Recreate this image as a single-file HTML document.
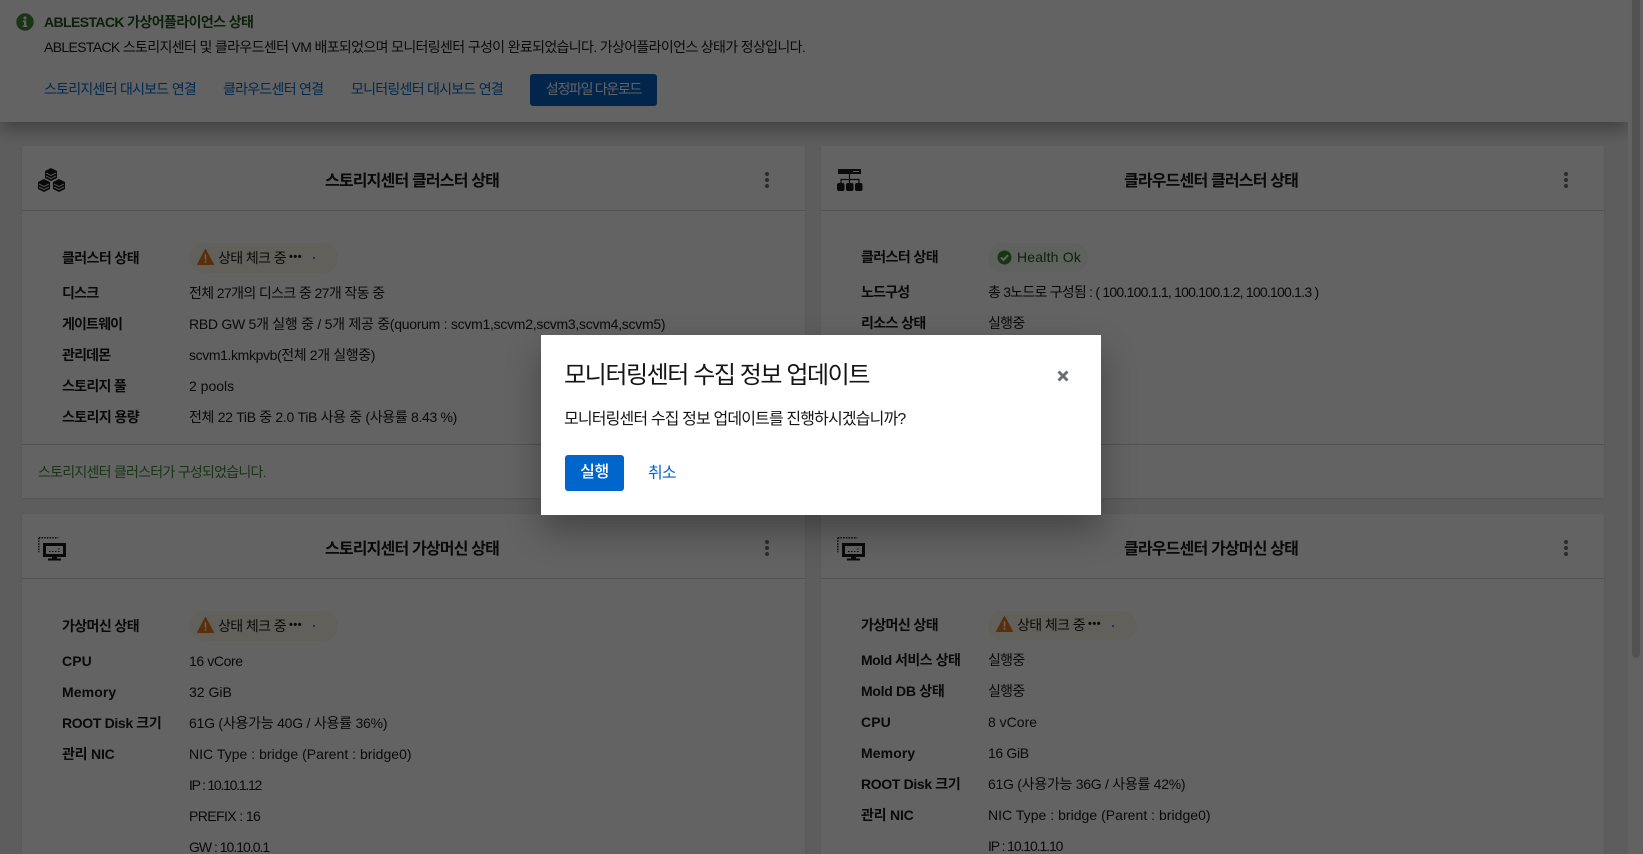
<!DOCTYPE html>
<html lang="ko"><head><meta charset="utf-8"><title>ABLESTACK</title>
<style>
*{box-sizing:border-box}
html,body{margin:0;padding:0;width:1643px;height:854px;overflow:hidden}
body{background:#f0f0f0;font-family:"Liberation Sans","Noto Sans CJK KR",sans-serif;font-size:14px;color:#151515;position:relative}
.t{position:absolute;line-height:20px;height:20px;white-space:nowrap}
.l{font-weight:700;letter-spacing:-.6px}
.k{letter-spacing:-.7px}
.card{position:absolute;background:#fff;width:783px;box-shadow:0 1px 2px rgba(3,3,3,.12)}
.hr{position:absolute;left:0;right:0;height:1px;background:#d2d2d2}
.h{font-size:16px;font-weight:700;text-align:center;left:0;right:3px;height:24px;line-height:24px;letter-spacing:-.82px}
.a{color:#06c;letter-spacing:-.74px}
.bdg{position:absolute;height:30px;border-radius:15px}
.w{background:#fdf7e7}.s{background:#f3faf2}
.dot{position:absolute;width:4px;height:4px;border-radius:50%;background:#6a6e73}
.d3{font-size:11px;font-weight:700;letter-spacing:.5px}
svg{position:absolute;overflow:visible}
</style></head><body>

<div style="position:absolute;left:0;top:0;width:1628px;height:854px;overflow:hidden">
<!-- Card 1 -->
<div class="card" style="left:22px;top:146px;height:352px">
  <div class="t h" style="top:24px">스토리지센터 클러스터 상태</div>
  <div class="hr" style="top:64px"></div><div class="hr" style="top:298px"></div>
  <i class="dot" style="left:743px;top:26px"></i><i class="dot" style="left:743px;top:32px"></i><i class="dot" style="left:743px;top:38px"></i>
  <div class="t" style="left:16px;top:316px;color:#3e8635;letter-spacing:-.75px">스토리지센터 클러스터가 구성되었습니다.</div>
</div>
<svg style="left:38px;top:168px" width="28" height="25" viewBox="0 0 28 25"><g fill="#151515"><path d="M13 0l6 3v7l-6 3-6-3V3z"/><path d="M6 11l6 3v7l-6 3-6-3v-7z"/><path d="M21 11l6 3v7l-6 3-6-3v-7z"/></g><g fill="none" stroke="#fff" stroke-width=".8"><path d="M8 5l5 2.500L18 5M8 8l5 2.500L18 8M1 16l5 2.500L11 16M1 19l5 2.500L11 19M16 16l5 2.500L26 16M16 19l5 2.500L26 19"/></g></svg>
<div class="bdg w" style="left:189px;top:243px;width:149px"></div>
<svg style="left:197px;top:249px" width="17" height="16" viewBox="0 0 16 15"><path d="M8 .5l7.500 14H.5z" fill="#e8751a" stroke="#e8751a" stroke-linejoin="round"/><path d="M7.200 5h1.600v5H7.200zM7.200 11h1.600v1.800H7.200z" fill="#fff"/></svg>
<div class="t" style="left:218px;top:248px;letter-spacing:-.6px">상태 체크 중</div>
<div class="t d3" style="left:289px;top:247px">•••</div>
<i style="position:absolute;left:313px;top:257px;width:2px;height:2px;background:#06c;border-radius:50%"></i>

<div class="t l" style="left:62px;top:248px">클러스터 상태</div>
<div class="t l" style="left:62px;top:283px;letter-spacing:-.7px">디스크</div><div class="t" style="left:189px;top:283px;letter-spacing:-.62px">전체 27개의 디스크 중 27개 작동 중</div>
<div class="t l" style="left:62px;top:314px;letter-spacing:-.85px">게이트웨이</div><div class="t" style="left:189px;top:314px;letter-spacing:-.27px">RBD GW 5개 실행 중 / 5개 제공 중(quorum : scvm1,scvm2,scvm3,scvm4,scvm5)</div>
<div class="t l" style="left:62px;top:345px;letter-spacing:-.8px">관리데몬</div><div class="t" style="left:189px;top:345px;letter-spacing:-.38px">scvm1.kmkpvb(전체 2개 실행중)</div>
<div class="t l" style="left:62px;top:376px;letter-spacing:-.7px">스토리지 풀</div><div class="t" style="left:189px;top:376px">2 pools</div>
<div class="t l" style="left:62px;top:407px">스토리지 용량</div><div class="t" style="left:189px;top:407px;letter-spacing:-.32px">전체 22 TiB 중 2.0 TiB 사용 중 (사용률 8.43 %)</div>

<!-- Card 2 -->
<div class="card" style="left:821px;top:146px;height:352px">
  <div class="t h" style="top:24px">클라우드센터 클러스터 상태</div>
  <div class="hr" style="top:64px"></div><div class="hr" style="top:298px"></div>
  <i class="dot" style="left:743px;top:26px"></i><i class="dot" style="left:743px;top:32px"></i><i class="dot" style="left:743px;top:38px"></i>
</div>
<svg style="left:837px;top:168px" width="26" height="23" viewBox="0 0 26 23"><path d="M1 1h23v5H1z" fill="#151515"/><path d="M16 3h6v1h-6z" fill="#fff"/><path d="M12.500 6v9M4 15v-3.500h18V15" fill="none" stroke="#151515" stroke-width="1.200"/><rect x="0" y="15" width="7.500" height="8" rx="2" fill="#151515"/><rect x="9" y="15" width="7.500" height="8" rx="2" fill="#151515"/><rect x="18" y="15" width="7.500" height="8" rx="2" fill="#151515"/></svg>
<div class="bdg s" style="left:988px;top:243px;width:100px;height:29px"></div>
<svg style="left:997px;top:250px" width="15" height="15" viewBox="0 0 15 15"><circle cx="7.500" cy="7.500" r="7" fill="#3e8635"/><path d="M4 7.500l2.500 2.500L11 5.200" fill="none" stroke="#fff" stroke-width="2"/></svg>
<div class="t" style="left:1017px;top:247px;color:#1e4f18;letter-spacing:.2px">Health Ok</div>
<div class="t l" style="left:861px;top:247px">클러스터 상태</div>
<div class="t l" style="left:861px;top:282px;letter-spacing:-.8px">노드구성</div><div class="t" style="left:988px;top:282px;letter-spacing:-.77px">총 3노드로 구성됨 : ( 100.100.1.1, 100.100.1.2, 100.100.1.3 )</div>
<div class="t l" style="left:861px;top:313px">리소스 상태</div><div class="t k" style="left:988px;top:313px">실행중</div>

<!-- Card 3 -->
<div class="card" style="left:22px;top:514px;height:400px">
  <div class="t h" style="top:24px">스토리지센터 가상머신 상태</div>
  <div class="hr" style="top:64px"></div>
  <i class="dot" style="left:743px;top:26px"></i><i class="dot" style="left:743px;top:32px"></i><i class="dot" style="left:743px;top:38px"></i>
</div>
<svg style="left:38px;top:537px" width="28" height="24" viewBox="0 0 28 24"><path d="M.8.800h19.500M.8.800v14.500" fill="none" stroke="#151515" stroke-width="1.500" stroke-dasharray="1.500 1.200"/><path d="M5 6h23v14H5z" fill="#151515"/><path d="M8 9h17v8H8z" fill="#fff"/><path d="M11 14.500h1.500M14 14.500h1.500M17 14.500h1.500M20 14.500h1.500M20 12h1.500" stroke="#151515"/><path d="M14 20h5v1.500h4V23.500H10v-2h4z" fill="#151515"/></svg>
<div class="bdg w" style="left:189px;top:611px;width:149px"></div>
<svg style="left:197px;top:617px" width="17" height="16" viewBox="0 0 16 15"><path d="M8 .5l7.500 14H.5z" fill="#e8751a" stroke="#e8751a" stroke-linejoin="round"/><path d="M7.200 5h1.600v5H7.200zM7.200 11h1.600v1.800H7.200z" fill="#fff"/></svg>
<div class="t" style="left:218px;top:616px;letter-spacing:-.6px">상태 체크 중</div>
<div class="t d3" style="left:289px;top:615px">•••</div>
<i style="position:absolute;left:313px;top:625px;width:2px;height:2px;background:#06c;border-radius:50%"></i>
<div class="t l" style="left:62px;top:616px">가상머신 상태</div>
<div class="t l" style="left:62px;top:651px;letter-spacing:.1px">CPU</div><div class="t" style="left:189px;top:651px;letter-spacing:-.4px">16 vCore</div>
<div class="t l" style="left:62px;top:682px;letter-spacing:.1px">Memory</div><div class="t" style="left:189px;top:682px">32 GiB</div>
<div class="t l" style="left:62px;top:713px;letter-spacing:-.35px">ROOT Disk 크기</div><div class="t" style="left:189px;top:713px;letter-spacing:-.23px">61G (사용가능 40G / 사용률 36%)</div>
<div class="t l" style="left:62px;top:744px;letter-spacing:-.2px">관리 NIC</div><div class="t" style="left:189px;top:744px;letter-spacing:.03px">NIC Type : bridge (Parent : bridge0)</div>
<div class="t" style="left:189px;top:775px;letter-spacing:-1.25px">IP : 10.10.1.12</div>
<div class="t" style="left:189px;top:806px;letter-spacing:-.6px">PREFIX : 16</div>
<div class="t" style="left:189px;top:837px;letter-spacing:-1px">GW : 10.10.0.1</div>

<!-- Card 4 -->
<div class="card" style="left:821px;top:514px;height:400px">
  <div class="t h" style="top:24px">클라우드센터 가상머신 상태</div>
  <div class="hr" style="top:64px"></div>
  <i class="dot" style="left:743px;top:26px"></i><i class="dot" style="left:743px;top:32px"></i><i class="dot" style="left:743px;top:38px"></i>
</div>
<svg style="left:837px;top:537px" width="28" height="24" viewBox="0 0 28 24"><path d="M.8.800h19.500M.8.800v14.500" fill="none" stroke="#151515" stroke-width="1.500" stroke-dasharray="1.500 1.200"/><path d="M5 6h23v14H5z" fill="#151515"/><path d="M8 9h17v8H8z" fill="#fff"/><path d="M11 14.500h1.500M14 14.500h1.500M17 14.500h1.500M20 14.500h1.500M20 12h1.500" stroke="#151515"/><path d="M14 20h5v1.500h4V23.500H10v-2h4z" fill="#151515"/></svg>
<div class="bdg w" style="left:988px;top:611px;width:149px;height:29px"></div>
<svg style="left:996px;top:616px" width="17" height="16" viewBox="0 0 16 15"><path d="M8 .5l7.500 14H.5z" fill="#e8751a" stroke="#e8751a" stroke-linejoin="round"/><path d="M7.200 5h1.600v5H7.200zM7.200 11h1.600v1.800H7.200z" fill="#fff"/></svg>
<div class="t" style="left:1017px;top:615px;letter-spacing:-.6px">상태 체크 중</div>
<div class="t d3" style="left:1088px;top:614px">•••</div>
<i style="position:absolute;left:1112px;top:625px;width:2px;height:2px;background:#06c;border-radius:50%"></i>
<div class="t l" style="left:861px;top:615px">가상머신 상태</div>
<div class="t l" style="left:861px;top:650px;letter-spacing:-.5px">Mold 서비스 상태</div><div class="t k" style="left:988px;top:650px">실행중</div>
<div class="t l" style="left:861px;top:681px;letter-spacing:-.3px">Mold DB 상태</div><div class="t k" style="left:988px;top:681px">실행중</div>
<div class="t l" style="left:861px;top:712px;letter-spacing:.1px">CPU</div><div class="t" style="left:988px;top:712px">8 vCore</div>
<div class="t l" style="left:861px;top:743px;letter-spacing:.1px">Memory</div><div class="t" style="left:988px;top:743px;letter-spacing:-.35px">16 GiB</div>
<div class="t l" style="left:861px;top:774px;letter-spacing:-.35px">ROOT Disk 크기</div><div class="t" style="left:988px;top:774px;letter-spacing:-.27px">61G (사용가능 36G / 사용률 42%)</div>
<div class="t l" style="left:861px;top:805px;letter-spacing:-.2px">관리 NIC</div><div class="t" style="left:988px;top:805px;letter-spacing:.03px">NIC Type : bridge (Parent : bridge0)</div>
<div class="t" style="left:988px;top:836px;letter-spacing:-1.1px">IP : 10.10.1.10</div>

<!-- Top panel -->
<div style="position:absolute;left:0;top:0;width:1628px;height:122px;background:#fff;box-shadow:0 8px 16px rgba(3,3,3,.3)"></div>
<svg style="left:16px;top:13px" width="18" height="18" viewBox="0 0 18 18"><circle cx="9" cy="9" r="8.700" fill="#3e8635"/><circle cx="9" cy="5" r="1.600" fill="#fff"/><path d="M7 7.500h3.200V12.500H11.300V14H6.800v-1.500H8V9H7z" fill="#fff"/></svg>
<div class="t" style="left:44px;top:12px;font-weight:700;color:#1e4f18;letter-spacing:-.6px">ABLESTACK 가상어플라이언스 상태</div>
<div class="t" style="left:44px;top:37px;letter-spacing:-.65px">ABLESTACK 스토리지센터 및 클라우드센터 VM 배포되었으며 모니터링센터 구성이 완료되었습니다. 가상어플라이언스 상태가 정상입니다.</div>
<div class="t a" style="left:44px;top:79px">스토리지센터 대시보드 연결</div>
<div class="t a" style="left:223px;top:79px">클라우드센터 연결</div>
<div class="t a" style="left:351px;top:79px">모니터링센터 대시보드 연결</div>
<div style="position:absolute;left:530px;top:74px;width:127px;height:32px;background:#0060c0;border-radius:3px;color:#fff;text-align:center;line-height:31px;letter-spacing:-1.3px">설정파일 다운로드</div>
</div>

<!-- Scrollbar -->
<div style="position:absolute;left:1628px;top:0;width:15px;height:854px;background:#fcfcfc"></div>
<div style="position:absolute;left:1632px;top:-8px;width:8px;height:666px;background:#d2d2d2;border-radius:4px"></div>

<!-- Backdrop -->
<div style="position:absolute;left:0;top:0;width:1643px;height:854px;background:rgba(3,3,3,.62)"></div>

<!-- Modal -->
<div style="position:absolute;left:541px;top:335px;width:560px;height:180px;background:#fff;box-shadow:0 16px 32px rgba(3,3,3,.3)">
  <div class="t" style="left:23px;top:23px;height:36px;line-height:36px;font-size:24px;letter-spacing:-1.42px">모니터링센터 수집 정보 업데이트</div>
  <svg style="left:516px;top:35px" width="12" height="12" viewBox="0 0 12 12"><path d="M1.500 1.500l9 9M10.500 1.500l-9 9" stroke="#6a6e73" stroke-width="3"/></svg>
  <div class="t" style="left:23px;top:73px;height:24px;line-height:24px;font-size:16px;letter-spacing:-.85px">모니터링센터 수집 정보 업데이트를 진행하시겠습니까?</div>
  <div style="position:absolute;left:24px;top:120px;width:59px;height:36px;background:#06c;border-radius:3px;color:#fff;font-size:16px;font-weight:500;text-align:center;line-height:36px;letter-spacing:-.3px">실행</div>
  <div class="t" style="left:107px;top:127px;height:24px;line-height:24px;font-size:16px;color:#06c;letter-spacing:-.8px">취소</div>
</div>
</body></html>
